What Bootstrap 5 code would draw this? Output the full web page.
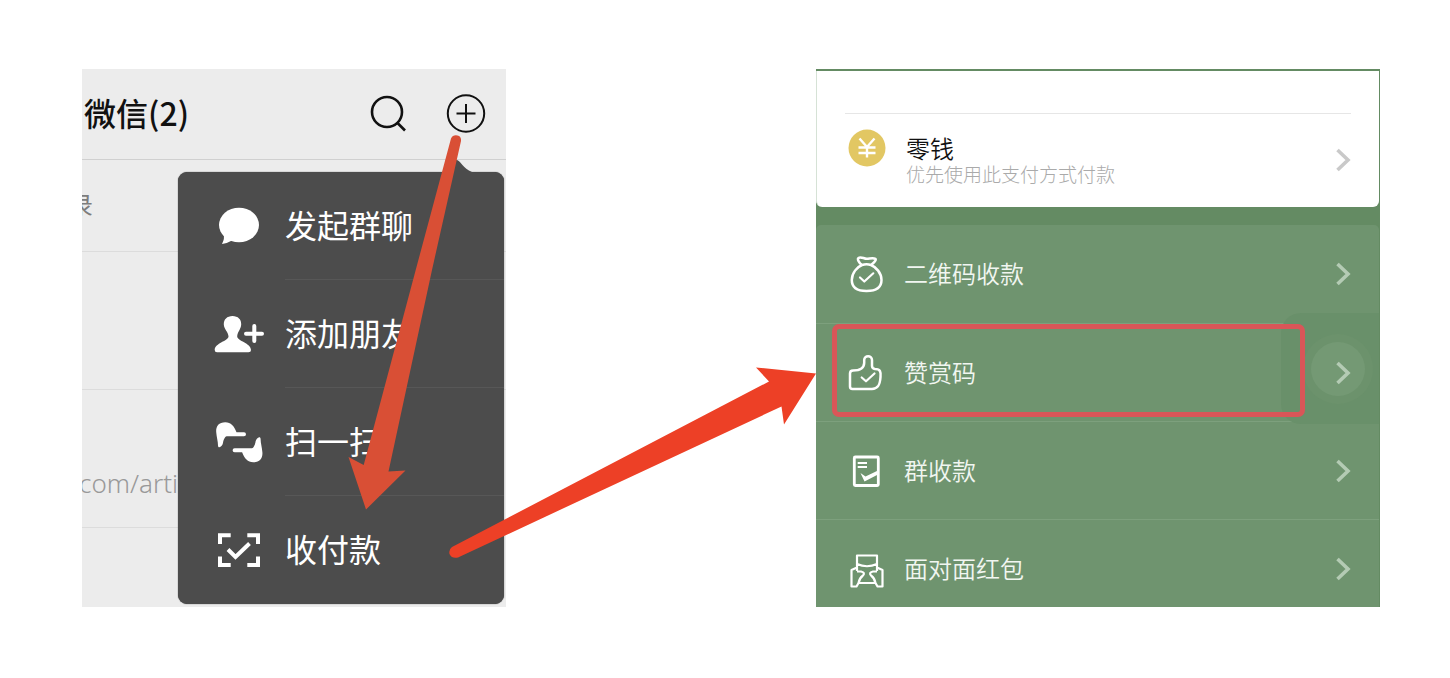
<!DOCTYPE html>
<html lang="zh-CN">
<head>
<meta charset="utf-8">
<meta name="viewport" content="width=device-width, initial-scale=1">
<title>微信赞赏码</title>
<link href="https://cdn.jsdelivr.net/npm/bootstrap@5.3.0/dist/css/bootstrap.min.css" rel="stylesheet">
<style>
  body { background: #fff; font-family: "Noto Sans CJK SC", "Noto Sans", sans-serif; }
  .guide { padding: 69px 70px 71px 82px; }
  .guide-steps { display: grid; grid-template-columns: 424fr 310fr 564fr; }
  .arrows { inset: 0; pointer-events: none; z-index: 5; }

  /* chat screen */
  .chat { background: #ececec; }
  .chat-head { height: 91px; padding: 0 20px 0 2px; border-bottom: 1px solid #d0d0d0; }
  .chat-title { padding-bottom: 4px; font-size: 32px; line-height: 40px; font-weight: 500; color: #111; }
  .icon-btn { width: 40px; height: 40px; color: #111; }
  .head-tools { gap: 39px; }
  .chat-row { height: 138px; border-bottom: 1px solid #dcdcdc; white-space: nowrap; }
  .chat-row.short { height: 92px; }
  .chat-row.last-row { height: 79px; border-bottom: 0; }
  .chat-row .snippet { margin-left: -13px; padding-bottom: 4px; font-size: 24px; line-height: 32px; color: #7d7d7d; }
  .chat-row .address { margin-left: -3px; padding-top: 48px; font-family: "Noto Sans", sans-serif; font-size: 26px; line-height: 32px; font-weight: 300; color: #999; }
  .plus-menu { top: 103px; right: 2px; width: 326px; background: #4c4c4c; border-radius: 9px; box-shadow: 0 0 1px #222; z-index: 2; }
  .menu-tip { top: -13px; right: 28px; }
  .menu-item { height: 108px; padding: 0 0 0 36px; color: #fff; font-size: 32px; line-height: 40px; background: none; }
  .menu-label { margin-left: 21px; padding-bottom: 4px; height: 108px; border-bottom: 1px solid #575757; }
  .menu-item:last-child .menu-label { border-bottom: 0; }

  /* payment screen */
  .pay { background: #648b63; padding-top: 2px; }
  .wallet { height: 136px; margin-right: 1px; background: #fff; border-left: 1px solid #d6e2d6; border-radius: 0 0 6px 6px; padding: 42px 28px 0; }
  .wallet-row { height: 92px; padding-left: 2px; border-top: 1px solid #e6e6e6; color: #111; }
  .coin { margin-top: -24px; }
  .wallet-name { font-size: 24px; line-height: 28px; font-weight: 350; }
  .wallet-note { font-size: 19px; line-height: 24px; font-weight: 300; color: #aaa; }
  .wallet-text { margin-left: 19px; }
  .pay-list { margin: 18px 1px 0 0; background: #6f946f; border-radius: 5px 5px 0 0; height: 382px; overflow: hidden; }
  .pay-item { height: 98px; padding: 0 28px 0 30px; color: #f1f6f1; font-size: 24px; line-height: 32px; font-weight: 350; }
  .pay-item + .pay-item { border-top: 1px solid #7da07d; }
  .pay-label { margin-left: 18px; padding-bottom: 2px; z-index: 1; }
  .chev-pale { color: #b4cbb4; z-index: 1; }
  .chev-grey { color: #c9c9c9; }
  .chosen { inset: 0 74px 4px 16px; border: 5px solid #d95658; border-radius: 7px; z-index: 2; }
  .touch-pad { inset: -11px 0 -3px auto; width: 98px; background: #69906a; border-radius: 20px 0 0 20px; }
  .touch-dot { width: 54px; height: 54px; right: 14px; top: 18px; border-radius: 50%; background: #749974; box-shadow: 0 0 0 8px #6c926c; }
</style>
</head>
<body>
<main class="guide">
  <div class="guide-steps position-relative">

    <section class="chat position-relative overflow-hidden" aria-label="微信">
      <header class="chat-head d-flex align-items-center justify-content-between">
        <h1 class="chat-title m-0">微信(2)</h1>
        <div class="head-tools d-flex">
          <button type="button" class="icon-btn btn p-0 border-0 d-flex" aria-label="搜索">
            <svg width="40" height="40" fill="none" stroke="currentColor" stroke-width="2.6"><circle cx="20" cy="18" r="15"/><path d="M30 28.500l8 8"/></svg>
          </button>
          <button type="button" class="icon-btn btn p-0 border-0 d-flex" aria-label="更多">
            <svg width="40" height="40" fill="none" stroke="currentColor" stroke-width="2"><circle cx="20" cy="19.500" r="18.200"/><path d="M10.500 19.500h19M20 10v19"/></svg>
          </button>
        </div>
      </header>
      <div class="chat-row short d-flex align-items-center"><span class="snippet">录</span></div>
      <div class="chat-row"></div>
      <div class="chat-row d-flex align-items-center"><span class="address">com/arti</span></div>
      <div class="chat-row last-row"></div>

      <nav class="plus-menu position-absolute" aria-label="更多">
        <svg class="menu-tip position-absolute" width="38" height="14" fill="#4c4c4c"><path d="M6 14C10 13 13 1 18 .8C22 .5 25 10 34 13L38 14Z"/></svg>
        <button type="button" class="menu-item btn border-0 rounded-0 w-100 d-flex align-items-center text-start">
          <svg width="50" height="50" fill="#fff"><ellipse cx="25" cy="24" rx="20" ry="17.300"/><path d="M9.500 33Q11 37 8 43Q14 42 18 39.500L24 40L12 29Z"/></svg>
          <span class="menu-label flex-grow-1 d-flex align-items-center">发起群聊</span>
        </button>
        <button type="button" class="menu-item btn border-0 rounded-0 w-100 d-flex align-items-center text-start">
          <svg width="50" height="50" fill="#fff"><path d="M18.500 7C24 7 27.500 10.500 27.200 15.500C27 20.500 23.200 23 23.200 27.500C23.200 32 37 34 37 41Q37 43.300 34.500 43.300H3Q.7 43.300 .7 41C.7 34 14.500 32 14.500 27.500C14.500 23 10 20.500 9.800 15.500C9.600 10.500 13 7 18.500 7Z"/><path d="M32 24.700H48M40.300 17V32" fill="none" stroke="#fff" stroke-width="4" stroke-linecap="round"/></svg>
          <span class="menu-label flex-grow-1 d-flex align-items-center">添加朋友</span>
        </button>
        <button type="button" class="menu-item btn border-0 rounded-0 w-100 d-flex align-items-center text-start">
          <svg width="50" height="50" fill="#fff"><path id="hand" d="M30 15.300H22.500C20 9 17 5.300 11.300 5.300C5 5.300 1.800 9 2.200 15C2.500 20 4 24 4 28.500C4 31 6.500 31 8.500 27.500C9.500 25.500 8.700 24 11 20.500C11.500 19.600 12 19.300 14 19.300H30A2 2 0 0 0 30 15.300Z"/><use href="#hand" transform="rotate(180 25.300 25.300)"/></svg>
          <span class="menu-label flex-grow-1 d-flex align-items-center">扫一扫</span>
        </button>
        <button type="button" class="menu-item btn border-0 rounded-0 w-100 d-flex align-items-center text-start">
          <svg width="50" height="50" fill="none" stroke="#fff" stroke-width="4"><path d="M16.700 10.300H6V19M33.300 10.300H44V19M6 31.500V40H16.700M44 31.500V40H33.300M14 24.500L21.500 32L35.500 18.500"/></svg>
          <span class="menu-label flex-grow-1 d-flex align-items-center">收付款</span>
        </button>
      </nav>
    </section>

    <div></div>

    <section class="pay overflow-hidden" aria-label="收付款">
      <div class="wallet">
        <a href="#" class="wallet-row d-flex align-items-center text-decoration-none">
          <svg class="coin" width="40" height="40"><circle cx="20" cy="20" r="18.500" fill="#e2c763"/><path d="M12.500 10.500L20 19L27.500 10.500M20 19V29.500M11.500 19.500H28.500M11.500 25H28.500" fill="none" stroke="#fff" stroke-width="2.400"/></svg>
          <span class="wallet-text flex-grow-1">
            <span class="wallet-name d-block">零钱</span>
            <span class="wallet-note d-block">优先使用此支付方式付款</span>
          </span>
          <svg class="chev-grey" width="16" height="24" fill="none" stroke="currentColor" stroke-width="3.600"><path d="M2.500 2L13 12L2.500 22"/></svg>
        </a>
      </div>

      <nav class="pay-list" aria-label="收款方式">
        <a href="#" class="pay-item d-flex align-items-center text-decoration-none">
          <svg width="40" height="40" fill="none" stroke="#fff" stroke-width="2.500" stroke-linejoin="round" stroke-linecap="round"><path d="M16 11C11 13 5.800 19 5.800 26C5.800 34 11 37 20.500 37S35.500 34 35.500 26C35.500 19 30 13 25 11Q20.500 9.500 16 11ZM16 11C13 9 11 5 12.500 4C15 2 18 5 21 4.800S27 3.500 29.500 4.800C30.500 6 28 9 25 11"/><path d="M14 23.500L18.300 27.500L27.300 19.300" stroke-width="2.200"/></svg>
          <span class="pay-label flex-grow-1">二维码收款</span>
          <svg class="chev-pale" width="16" height="24" fill="none" stroke="currentColor" stroke-width="3.600"><path d="M2.500 2L13 12L2.500 22"/></svg>
        </a>
        <a href="#" class="pay-item position-relative d-flex align-items-center text-decoration-none">
          <span class="touch-pad position-absolute"></span>
          <span class="touch-dot position-absolute"></span>
          <svg width="40" height="40" fill="none" stroke="#fff" stroke-width="2.500" stroke-linejoin="round" stroke-linecap="round"><path d="M7 17.500C14 17.500 18 15.500 18.200 10V7C18.200 2 26 2 26 7V13Q26 15.500 29 16C34.500 16 35 19 34.500 24C34 32 32 36 26 36H6.500Q4 36 4 33.500V20.500Q4 17.500 7 17.500Z"/><path d="M15.700 24.500L20 28.300L28.500 20.500" stroke-width="2.200"/></svg>
          <span class="pay-label flex-grow-1">赞赏码</span>
          <svg class="chev-pale" width="16" height="24" fill="none" stroke="currentColor" stroke-width="3.600"><path d="M2.500 2L13 12L2.500 22"/></svg>
          <span class="chosen position-absolute"></span>
        </a>
        <a href="#" class="pay-item d-flex align-items-center text-decoration-none">
          <svg width="40" height="40" fill="none" stroke="#fff" stroke-width="2.800" stroke-linejoin="round"><rect x="8.300" y="6" width="24" height="28.500" rx="1"/><path d="M11.700 12H21M11.700 16H21" stroke-width="2"/><path d="M14.500 22L19.500 25.500L32 19.500V23.500L18.500 30.500Z" fill="#fff" stroke="none"/></svg>
          <span class="pay-label flex-grow-1">群收款</span>
          <svg class="chev-pale" width="16" height="24" fill="none" stroke="currentColor" stroke-width="3.600"><path d="M2.500 2L13 12L2.500 22"/></svg>
        </a>
        <a href="#" class="pay-item d-flex align-items-center text-decoration-none">
          <svg width="40" height="40" fill="none" stroke="#fff" stroke-width="2.200" stroke-linejoin="round"><path d="M11 22V6.500H31V22M11 15Q21 19.500 31 15M11 18.500L5.500 21V37.500H10.500L12.500 34H29.500L31.500 37.500H36.500V21L31 18.500M11 22.500H15Q20 23.500 16.500 27Q13.500 29 12.500 34M31 22.500H27Q22 23.500 25.500 27Q28.500 29 29.500 34"/></svg>
          <span class="pay-label flex-grow-1">面对面红包</span>
          <svg class="chev-pale" width="16" height="24" fill="none" stroke="currentColor" stroke-width="3.600"><path d="M2.500 2L13 12L2.500 22"/></svg>
        </a>
      </nav>
    </section>

    <svg class="arrows position-absolute w-100 h-100" viewBox="82 69 1298 538" preserveAspectRatio="none" aria-hidden="true">
      <path fill="#d94f35" d="M451 138.500Q453 134.500 457.500 135.500Q461.500 136.500 461 141L432 270L388.500 471.500L405.500 470.500L366 509.500L348.500 457L363.700 465L415.700 270Z"/>
      <path fill="#ed4026" d="M452 547L769 381.500L756 367.500L816 373.500L784 424.500L781.500 406.500L458 557.500Q452 559 449.500 554Q448.500 549.500 452 547Z"/>
    </svg>
  </div>
</main>
<script src="https://cdn.jsdelivr.net/npm/bootstrap@5.3.0/dist/js/bootstrap.bundle.min.js"></script>
</body>
</html>
